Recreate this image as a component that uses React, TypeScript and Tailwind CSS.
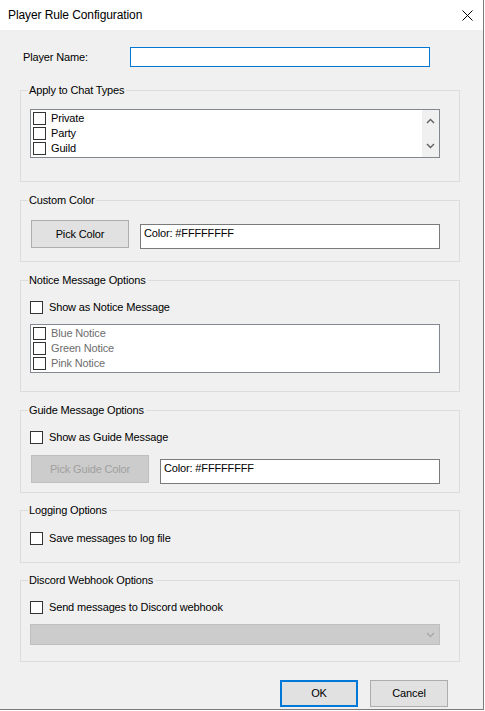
import React from 'react'

const font = { fontFamily: '"Liberation Sans", Arial, sans-serif' }

function Box() {
  return <span className="block w-[13px] h-[13px] shrink-0 border border-[#333333] bg-white" />
}

function CheckRow({ label, className = '' }: { label: string; className?: string }) {
  return (
    <div className={'flex items-center h-[15px] ml-[9px] ' + className}>
      <Box />
      <span className="ml-[6px] text-black">{label}</span>
    </div>
  )
}

function ListItem({ label, disabled = false }: { label: string; disabled?: boolean }) {
  return (
    <div className="flex items-center h-[15px] pl-[2px]">
      <Box />
      <span className={'ml-[5px] ' + (disabled ? 'text-[#6d6d6d]' : 'text-black')}>{label}</span>
    </div>
  )
}

function Group({
  title,
  className,
  children,
}: {
  title: string
  className: string
  children: React.ReactNode
}) {
  return (
    <div className={'relative mx-[20px] w-[440px] border border-[#dcdcdc] ' + className}>
      <span className="absolute left-[7px] -top-[7px] bg-[#f0f0f0] pl-[1px] pr-[2px] leading-[13px] text-black">
        {title}
      </span>
      {children}
    </div>
  )
}

function Chevron({ up = false, color = '#606060' }: { up?: boolean; color?: string }) {
  return (
    <svg width="9" height="6" viewBox="0 0 9 6">
      <path
        d={up ? 'M1 5 L4.5 1.5 L8 5' : 'M1 1 L4.5 4.5 L8 1'}
        fill="none"
        stroke={color}
        strokeWidth="1.4"
      />
    </svg>
  )
}

export default function App() {
  return (
    <div
      className="w-[484px] h-[710px] bg-[#f0f0f0] border-r border-b border-[#7a7a7a] flex flex-col text-[11px] leading-[13px] tracking-[-0.15px]"
      style={font}
    >
      <div className="h-[30px] bg-white flex items-center justify-between pl-[8px] pr-[10px] shrink-0">
        <span className="text-[12px] tracking-[-0.1px] text-black">Player Rule Configuration</span>
        <svg width="11" height="11" viewBox="0 0 11 11">
          <path d="M0.5 0.5 L10.5 10.5 M10.5 0.5 L0.5 10.5" stroke="#000" strokeWidth="1" />
        </svg>
      </div>

      <div className="flex items-center mt-[17px] pl-[23px]">
        <span className="w-[107px] text-black">Player Name:</span>
        <div className="w-[300px] h-[20px] bg-white border border-[#0078d7]" />
      </div>

      <Group title="Apply to Chat Types" className="mt-[23px] h-[92px]">
        <div className="mt-[18px] ml-[9px] w-[410px] h-[49px] bg-white border border-[#828790] flex">
          <div className="flex-1 pt-[1px]">
            <ListItem label="Private" />
            <ListItem label="Party" />
            <ListItem label="Guild" />
          </div>
          <div className="w-[17px] bg-[#f0f0f0] flex flex-col items-center justify-between pt-[8px] pb-[8px]">
            <Chevron up />
            <Chevron />
          </div>
        </div>
      </Group>

      <Group title="Custom Color" className="mt-[18px] h-[62px]">
        <div className="flex items-start mt-[19px] ml-[10px]">
          <div className="w-[98px] h-[28px] bg-[#e1e1e1] border border-[#adadad] flex items-center justify-center text-black">
            Pick Color
          </div>
          <div className="ml-[11px] mt-[4px] w-[300px] h-[25px] bg-white border border-[#7a7a7a] pl-[3px] pt-[2px] text-black">
            Color: #FFFFFFFF
          </div>
        </div>
      </Group>

      <Group title="Notice Message Options" className="mt-[18px] h-[112px]">
        <CheckRow label="Show as Notice Message" className="mt-[19px]" />
        <div className="mt-[9px] ml-[9px] w-[410px] h-[49px] bg-white border border-[#828790] pt-[1px]">
          <ListItem label="Blue Notice" disabled />
          <ListItem label="Green Notice" disabled />
          <ListItem label="Pink Notice" disabled />
        </div>
      </Group>

      <Group title="Guide Message Options" className="mt-[18px] h-[83px]">
        <CheckRow label="Show as Guide Message" className="mt-[19px]" />
        <div className="flex items-start mt-[10px] ml-[10px]">
          <div className="w-[118px] h-[28px] bg-[#cccccc] border border-[#bfbfbf] flex items-center justify-center text-[#a0a0a0]">
            Pick Guide Color
          </div>
          <div className="ml-[11px] mt-[4px] w-[280px] h-[25px] bg-white border border-[#7a7a7a] pl-[3px] pt-[2px] text-black">
            Color: #FFFFFFFF
          </div>
        </div>
      </Group>

      <Group title="Logging Options" className="mt-[17px] h-[53px]">
        <CheckRow label="Save messages to log file" className="mt-[20px]" />
      </Group>

      <Group title="Discord Webhook Options" className="mt-[17px] h-[82px]">
        <CheckRow label="Send messages to Discord webhook" className="mt-[19px]" />
        <div className="mt-[9px] ml-[9px] w-[410px] h-[21px] bg-[#cccccc] border border-[#bfbfbf] flex items-center justify-end pr-[4px]">
          <Chevron color="#a8a8a8" />
        </div>
      </Group>

      <div className="flex justify-end gap-[12px] mt-[18px] pr-[35px]">
        <div className="w-[78px] h-[27px] bg-[#e1e1e1] border-2 border-[#0078d7] flex items-center justify-center text-black">
          OK
        </div>
        <div className="w-[78px] h-[27px] bg-[#e1e1e1] border border-[#adadad] flex items-center justify-center text-black">
          Cancel
        </div>
      </div>
    </div>
  )
}
